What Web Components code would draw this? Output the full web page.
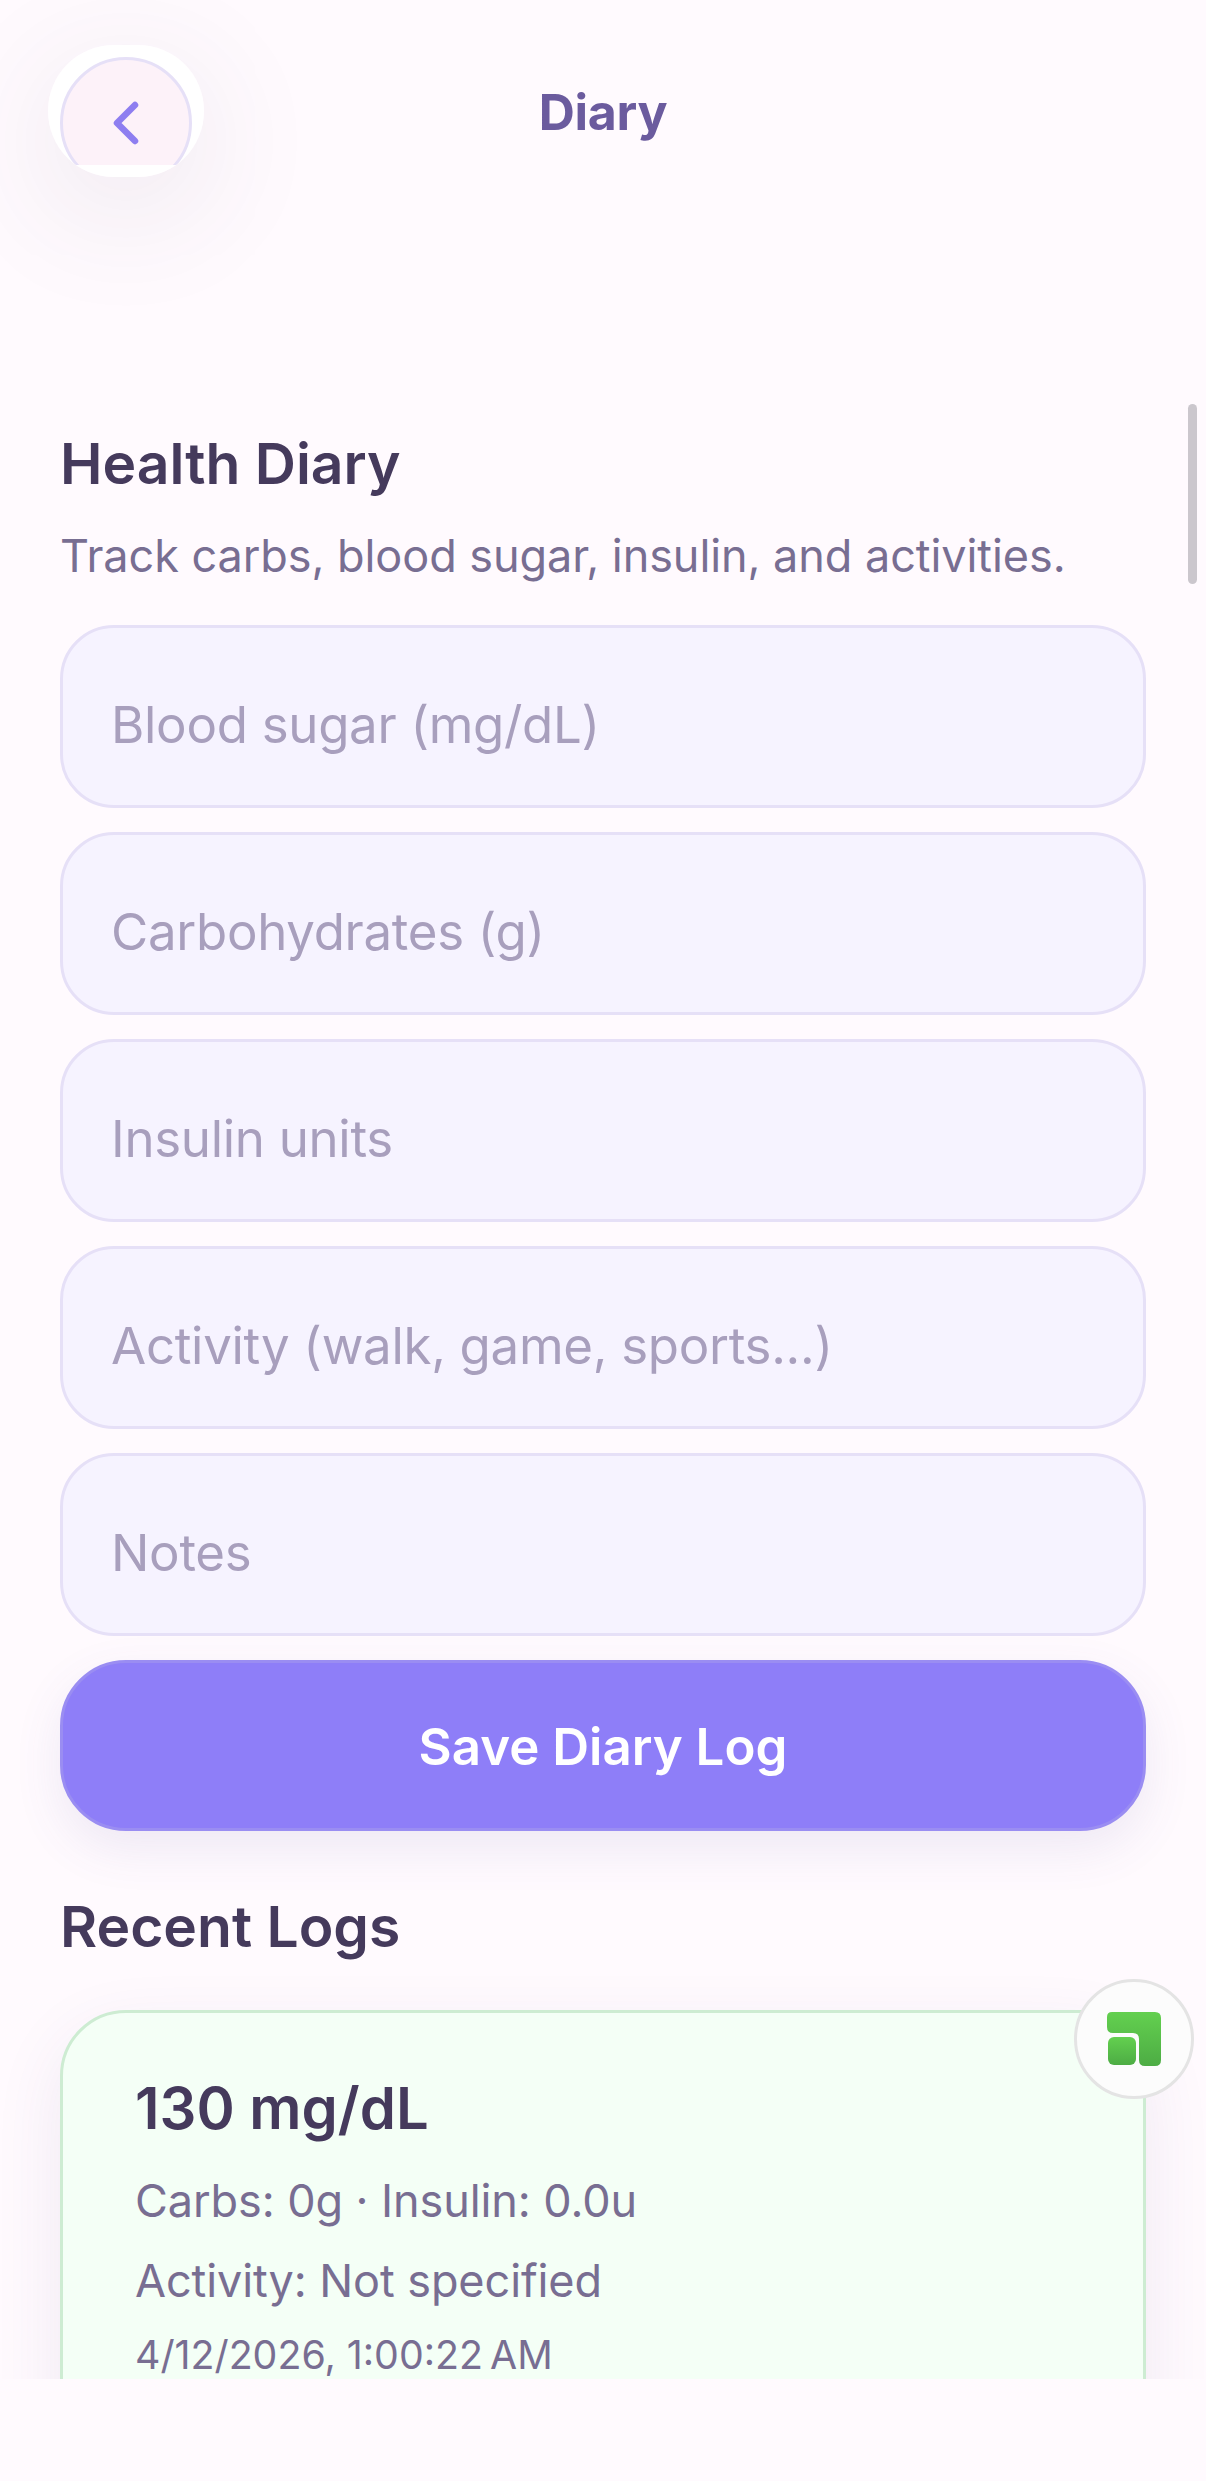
<!doctype html>
<html><head><meta charset="utf-8">
<style>
html,body{margin:0;padding:0;background:#fffafe;}
body{font-family:Inter,"Noto Sans",sans-serif;width:1206px;height:2481px;overflow:hidden;}
</style></head><body>
<diary-app></diary-app>
<template id="t-app"><style>
:host{display:block;position:relative;width:1206px;height:2481px;background:#fffafe;overflow:hidden;color:#453a5c}
.view{height:2379px;overflow:hidden;display:flex;flex-direction:column}
.content{padding:0 60px;display:flex;flex-direction:column;flex:none}
.form{display:flex;flex-direction:column;gap:24px}
.scrollbar{position:absolute;left:1188px;top:404px;width:9px;height:180px;border-radius:5px;background:#cbc7cd}
h2{margin:0;font-size:57px;line-height:70px;font-weight:600;color:#453a5c}
.sub{margin:29px 0 41px;font-size:45px;line-height:56px;letter-spacing:-.06px;color:#786e92}
.recent{margin-top:61px;margin-bottom:48px}
</style>
<div class="view">
<diary-header>Diary</diary-header>
<div class="content">
<h2>Health Diary</h2>
<p class="sub">Track carbs, blood sugar, insulin, and activities.</p>
<div class="form">
<diary-field>Blood sugar (mg/dL)</diary-field>
<diary-field>Carbohydrates (g)</diary-field>
<diary-field>Insulin units</diary-field>
<diary-field>Activity (walk, game, sports...)</diary-field>
<diary-field>Notes</diary-field>
<diary-button>Save Diary Log</diary-button>
</div>
<h2 class="recent">Recent Logs</h2>
<log-card></log-card>
</div>
</div>
<div class="scrollbar"></div>
<float-badge></float-badge>
</template>

<template id="t-header"><style>
:host{display:flex;height:429px;position:relative;flex:none}
.title{position:absolute;left:0;right:0;top:88px;text-align:center;font-size:50px;line-height:48px;font-weight:700;color:#6b5b9e;letter-spacing:-.3px}
.outer{margin:45px 0 0 48px;width:156px;height:132px;border-radius:66px;background:rgba(255,255,255,.9);box-shadow:0 30px 130px rgba(70,60,90,.11);overflow:hidden;padding:12px;box-sizing:border-box}
.clip{height:108px;overflow:hidden}
.circle{height:132px;width:132px;box-sizing:border-box;border-radius:50%;background:#fdf2f9;border:3px solid #e6e0f7;display:flex;align-items:center;justify-content:center}
svg{display:block}
</style>
<div class="outer"><div class="clip"><div class="circle">
<svg width="48" height="48" viewBox="0 0 48 48" fill="none"><path d="M33 6 L15 24 L33 42" stroke="#8e7ef0" stroke-width="6.5" stroke-linecap="round" stroke-linejoin="round"/></svg>
</div></div></div>
<div class="title"><slot></slot></div>
</template>

<template id="t-field"><style>
:host{display:flex;align-items:center;box-sizing:border-box;height:183px;padding:17px 48px 0;border:3px solid #e6e0f7;border-radius:54px;background:#f6f3ff;color:#a89fbd;font-size:51px;letter-spacing:-.3px;line-height:60px}
</style><slot></slot></template>

<template id="t-button"><style>
:host{display:flex;align-items:center;justify-content:center;box-sizing:border-box;height:171px;padding-top:2px;border:3px solid #9a8df2;border-radius:66px;background:#8e7ef8;color:#fff;font-size:51px;font-weight:600;box-shadow:0 18px 48px rgba(90,80,160,.10)}
</style><slot></slot></template>

<template id="t-card"><style>
:host{display:block;box-sizing:border-box;height:480px;border:3px solid #cdecd2;border-radius:66px;background:#f4fff6;padding:60px 72px;box-shadow:0 24px 70px rgba(80,60,120,.09)}
.v{font-size:58px;line-height:70px;font-weight:600;color:#453a5c;margin-bottom:30px}
.l{font-size:45px;line-height:56px;letter-spacing:-.08px;color:#786e92;margin-bottom:24px}
.d{font-size:39.3px;line-height:48px;margin-top:-2px;color:#786e92}
</style>
<div class="v">130 mg/dL</div>
<div class="l">Carbs: 0g · Insulin: 0.0u</div>
<div class="l">Activity: Not specified</div>
<div class="d">4/12/2026, 1:00:22&#8239;AM</div>
</template>

<template id="t-badge"><style>
:host{position:absolute;left:1074px;top:1979px;width:120px;height:120px;box-sizing:border-box;border-radius:50%;background:#fcfcfc;border:3px solid #e4e4e4;display:flex;align-items:center;justify-content:center}
</style>
<svg width="54" height="54" viewBox="0 0 54 54"><defs><linearGradient id="g" x1="0" y1="0" x2="0" y2="1"><stop offset="0" stop-color="#63d04f"/><stop offset="1" stop-color="#4dac44"/></linearGradient></defs>
<path fill="url(#g)" d="M5 0H48Q54 0 54 6V48Q54 54 48 54H38Q32 54 32 48V27Q32 21 26 21H6Q0 21 0 15V5Q0 0 5 0Z"/>
<rect x="1" y="25" width="28" height="28" rx="6" fill="url(#g)"/></svg>
</template>

<script>
function def(name,tpl){customElements.define(name,class extends HTMLElement{constructor(){super();this.attachShadow({mode:'open'}).appendChild(document.getElementById(tpl).content.cloneNode(true));}});}
def('diary-header','t-header');def('diary-field','t-field');def('diary-button','t-button');def('log-card','t-card');def('float-badge','t-badge');def('diary-app','t-app');
</script>
</body></html>
